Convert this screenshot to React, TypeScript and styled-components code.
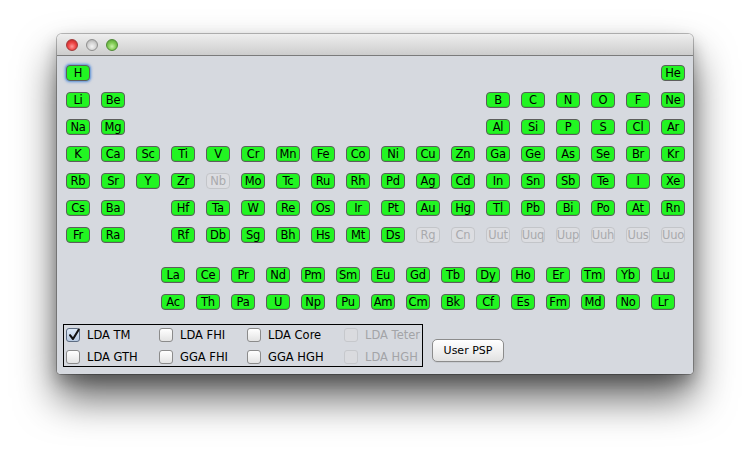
import styled, { createGlobalStyle } from "styled-components";

// DATA
const TABLE: string[][] = [
  ["H", "", "", "", "", "", "", "", "", "", "", "", "", "", "", "", "", "He"],
  ["Li", "Be", "", "", "", "", "", "", "", "", "", "", "B", "C", "N", "O", "F", "Ne"],
  ["Na", "Mg", "", "", "", "", "", "", "", "", "", "", "Al", "Si", "P", "S", "Cl", "Ar"],
  ["K", "Ca", "Sc", "Ti", "V", "Cr", "Mn", "Fe", "Co", "Ni", "Cu", "Zn", "Ga", "Ge", "As", "Se", "Br", "Kr"],
  ["Rb", "Sr", "Y", "Zr", "Nb", "Mo", "Tc", "Ru", "Rh", "Pd", "Ag", "Cd", "In", "Sn", "Sb", "Te", "I", "Xe"],
  ["Cs", "Ba", "", "Hf", "Ta", "W", "Re", "Os", "Ir", "Pt", "Au", "Hg", "Tl", "Pb", "Bi", "Po", "At", "Rn"],
  ["Fr", "Ra", "", "Rf", "Db", "Sg", "Bh", "Hs", "Mt", "Ds", "Rg", "Cn", "Uut", "Uuq", "Uup", "Uuh", "Uus", "Uuo"],
];

const SERIES: string[][] = [
  ["La", "Ce", "Pr", "Nd", "Pm", "Sm", "Eu", "Gd", "Tb", "Dy", "Ho", "Er", "Tm", "Yb", "Lu"],
  ["Ac", "Th", "Pa", "U", "Np", "Pu", "Am", "Cm", "Bk", "Cf", "Es", "Fm", "Md", "No", "Lr"],
];

const DISABLED = new Set(["Nb", "Rg", "Cn", "Uut", "Uuq", "Uup", "Uuh", "Uus", "Uuo"]);

const PSP_OPTIONS = [
  { label: "LDA TM", checked: true },
  { label: "LDA FHI" },
  { label: "LDA Core" },
  { label: "LDA Teter", disabled: true },
  { label: "LDA GTH" },
  { label: "GGA FHI" },
  { label: "GGA HGH" },
  { label: "LDA HGH", disabled: true },
];

// CSS COMPONENTS
const GlobalStyle = createGlobalStyle`
  html, body {
    margin: 0;
    background: #ffffff;
  }
  body {
    font-family: "DejaVu Sans", "Liberation Sans", sans-serif;
  }
`;

const Page = styled.div`
  width: 750px;
  height: 453px;
  box-sizing: border-box;
  padding: 34px 57px;
  overflow: hidden;
`;

const Window = styled.div`
  width: 636px;
  height: 340px;
  border-radius: 5px 5px 4px 4px;
  overflow: hidden;
  display: flex;
  flex-direction: column;
  box-shadow: 0 0 0 1px rgba(0, 0, 0, 0.25), 0 24px 40px rgba(0, 0, 0, 0.62),
    0 8px 16px rgba(0, 0, 0, 0.25);
`;

const TitleBar = styled.div`
  height: 21px;
  flex-shrink: 0;
  display: flex;
  align-items: center;
  gap: 8px;
  padding-left: 9px;
  background: linear-gradient(#eeeeee, #cdcdcd);
  border-bottom: 1px solid #7b7b7b;
`;

const Light = styled.span<{ $tone: "red" | "gray" | "green" }>`
  width: 12px;
  height: 12px;
  border-radius: 50%;
  box-sizing: border-box;
  border: 1px solid
    ${(p) => (p.$tone === "red" ? "#a23a3a" : p.$tone === "green" ? "#4f8a35" : "#8f8f8f")};
  background: ${(p) =>
    p.$tone === "red"
      ? "radial-gradient(circle at 50% 65%, #ff9a9a 0%, #ee4747 45%, #b71d1d 100%)"
      : p.$tone === "green"
      ? "radial-gradient(circle at 50% 65%, #c9f2a8 0%, #82cb55 45%, #4c9a2b 100%)"
      : "radial-gradient(circle at 50% 65%, #f4f4f4 0%, #d2d2d2 50%, #a3a3a3 100%)"};
`;

const Content = styled.div`
  flex: 1;
  background: #d6d9df;
  padding: 9px 0 7px 9px;
  display: flex;
  flex-direction: column;
`;

const TableGrid = styled.div`
  display: grid;
  grid-template-columns: repeat(18, 24px);
  grid-auto-rows: 16px;
  gap: 11px;
`;

const SeriesGrid = styled.div`
  display: grid;
  grid-template-columns: repeat(15, 24px);
  grid-auto-rows: 16px;
  gap: 11px;
  margin: 24px 0 0 95px;
`;

const ElementButton = styled.button<{ $off?: boolean; $focus?: boolean }>`
  box-sizing: border-box;
  width: 24px;
  height: 16px;
  padding: 0;
  display: flex;
  align-items: center;
  justify-content: center;
  white-space: nowrap;
  font-family: "DejaVu Sans", sans-serif;
  font-size: 11.5px;
  letter-spacing: -0.2px;
  line-height: 14px;
  border-radius: 4px;
  color: ${(p) => (p.$off ? "#a9aaad" : "#000000")};
  background: ${(p) => (p.$off ? "#dcdde1" : "#22f522")};
  border: 1px solid ${(p) => (p.$off ? "#c3c5c9" : "#5d5d5d")};
  box-shadow: ${(p) =>
    p.$focus
      ? "0 0 0 1px #7fa6d9, 0 0 2px 2px rgba(110, 155, 220, 0.55)"
      : p.$off
      ? "none"
      : "inset 0 -1px 0 rgba(0, 0, 0, 0.08)"};
`;

const BottomRow = styled.div`
  display: flex;
  align-items: flex-end;
  margin: 14px 0 0 -3px;
`;

const OptionPanel = styled.div`
  box-sizing: border-box;
  width: 360px;
  height: 43px;
  border: 1px solid #000000;
  padding-left: 2px;
  display: grid;
  grid-template-columns: 93px 88px 97px 1fr;
  grid-template-rows: 19px 19px;
  row-gap: 3px;
  align-items: center;
  overflow: hidden;
`;

const Option = styled.label<{ $off?: boolean }>`
  display: flex;
  align-items: center;
  gap: 7px;
  white-space: nowrap;
  font-size: 11.5px;
  color: ${(p) => (p.$off ? "#a3a4a7" : "#000000")};
`;

const CheckBox = styled.span<{ $checked?: boolean; $off?: boolean }>`
  box-sizing: border-box;
  width: 14px;
  height: 14px;
  flex-shrink: 0;
  border-radius: 3px;
  position: relative;
  border: 1px solid
    ${(p) => (p.$off ? "#c6c8cc" : p.$checked ? "#5e6d83" : "#8b8b8b")};
  background: ${(p) =>
    p.$off
      ? "#dadbdf"
      : p.$checked
      ? "linear-gradient(#dde8f5, #b7c9e1)"
      : "linear-gradient(#ffffff, #e3e3e3)"};

  svg {
    position: absolute;
    left: 0;
    top: -2px;
  }
`;

const PushButton = styled.button`
  box-sizing: border-box;
  width: 72px;
  height: 23px;
  margin: 0 0 5px 9px;
  padding: 0;
  font-family: "DejaVu Sans", sans-serif;
  font-size: 11px;
  color: #000000;
  border: 1px solid #8c8c8c;
  border-radius: 5px;
  background: linear-gradient(#ffffff, #f1f1f1 50%, #e2e2e2);
  box-shadow: 0 1px 0 rgba(0, 0, 0, 0.06);
`;

const renderCell = (sym: string, key: string) =>
  sym === "" ? (
    <span key={key} />
  ) : (
    <ElementButton key={key} $off={DISABLED.has(sym)} $focus={sym === "H"}>
      {sym}
    </ElementButton>
  );

export default function App() {
  return (
    <>
      <GlobalStyle />
      <Page>
        <Window>
          <TitleBar>
            <Light $tone="red" />
            <Light $tone="gray" />
            <Light $tone="green" />
          </TitleBar>

          <Content>
            <TableGrid>
              {TABLE.map((row, r) => row.map((sym, c) => renderCell(sym, `t${r}-${c}`)))}
            </TableGrid>

            <SeriesGrid>
              {SERIES.map((row, r) => row.map((sym, c) => renderCell(sym, `s${r}-${c}`)))}
            </SeriesGrid>

            <BottomRow>
              <OptionPanel>
                {PSP_OPTIONS.map((opt) => (
                  <Option key={opt.label} $off={opt.disabled}>
                    <CheckBox $checked={opt.checked} $off={opt.disabled}>
                      {opt.checked && (
                        <svg width="15" height="15" viewBox="0 0 15 15">
                          <path
                            d="M3 8.2 L6 12 L11.8 2.5"
                            fill="none"
                            stroke="#111"
                            strokeWidth="2.1"
                            strokeLinecap="round"
                            strokeLinejoin="round"
                          />
                        </svg>
                      )}
                    </CheckBox>
                    {opt.label}
                  </Option>
                ))}
              </OptionPanel>
              <PushButton>User PSP</PushButton>
            </BottomRow>
          </Content>
        </Window>
      </Page>
    </>
  );
}
